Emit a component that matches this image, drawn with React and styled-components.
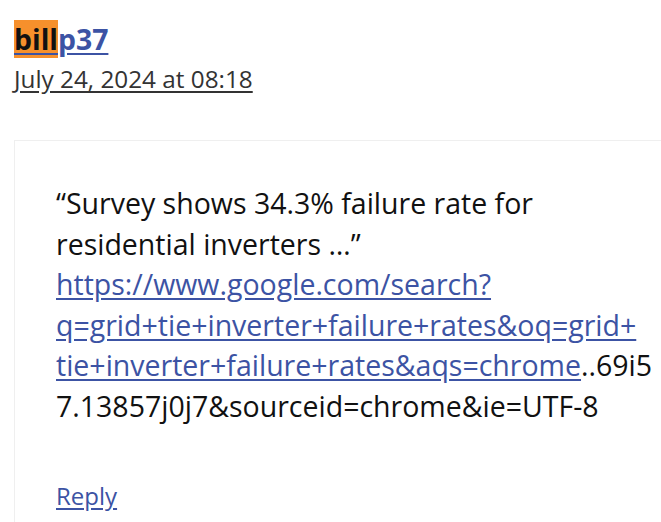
import React from 'react';
import styled, { createGlobalStyle } from 'styled-components';

const GlobalStyle = createGlobalStyle`
  html, body {
    margin: 0;
    padding: 0;
    background: #fff;
    overflow: hidden;
  }
  body {
    font-family: "Open Sans", "Noto Sans", sans-serif;
    color: #111;
  }
`;

const Comment = styled.article`
  padding: 20px 0 0 14px;
`;

const Meta = styled.header`
  display: flex;
  flex-direction: column;
  align-items: flex-start;
`;

const Author = styled.a`
  font-size: 28.4px;
  font-weight: 700;
  line-height: 38px;
  color: #3c53a4;
  text-decoration: underline;
  text-underline-offset: 3px;
`;

const Highlight = styled.mark`
  background: #f6902c;
  color: #111;
`;

const Date = styled.a`
  margin-top: 2px;
  font-size: 24.3px;
  line-height: 38px;
  color: #333;
  text-decoration: underline;
  text-underline-offset: 3px;
`;

const Body = styled.div`
  margin-top: 42px;
  width: 700px;
  border: 1px solid #efefef;
  border-right: none;
  padding: 42px 0 60px 41px;
`;

const Paragraph = styled.p`
  margin: 0;
  font-size: 28.5px;
  line-height: 40.6px;
  color: #111;
`;

const Link = styled.a`
  color: #3c53a4;
  text-decoration: underline;
  text-underline-offset: 3px;
`;

const ReplyLink = styled(Link)`
  display: inline-block;
  margin-top: 52px;
  font-size: 24px;
`;

export default function App() {
  return (
    <>
      <GlobalStyle />
      <Comment>
        <Meta>
          <Author href="#">
            <Highlight>bill</Highlight>p37
          </Author>
          <Date href="#">July 24, 2024 at 08:18</Date>
        </Meta>
        <Body>
          <Paragraph>
            “Survey shows 34.3% failure rate for
            <br />
            residential inverters …”
            <br />
            <Link href="#">
              https://www.google.com/search?
              <br />
              q=grid+tie+inverter+failure+rates&amp;oq=grid+
              <br />
              tie+inverter+failure+rates&amp;aqs=chrome
            </Link>
            ..69i5
            <br />
            7.13857j0j7&amp;sourceid=chrome&amp;ie=UTF-8
          </Paragraph>
          <ReplyLink href="#">Reply</ReplyLink>
        </Body>
      </Comment>
    </>
  );
}
